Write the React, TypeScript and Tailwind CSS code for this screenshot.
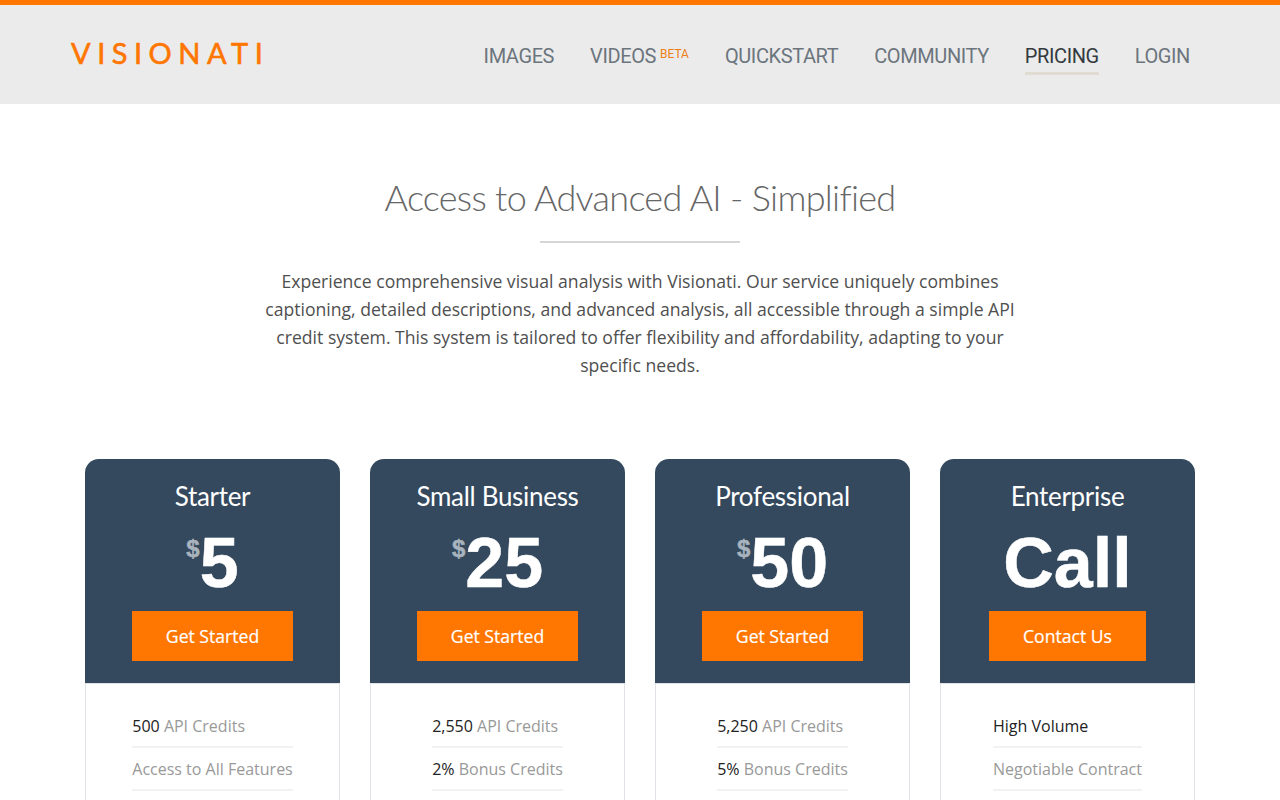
const navItems = ["IMAGES", "VIDEOS", "QUICKSTART", "COMMUNITY", "PRICING", "LOGIN"];

interface Plan {
  name: string;
  price: string;
  button: string;
  features: [string, string][];
}

const plans: Plan[] = [
  { name: "Starter", price: "5", button: "Get Started", features: [["500", " API Credits"], ["", "Access to All Features"]] },
  { name: "Small Business", price: "25", button: "Get Started", features: [["2,550", " API Credits"], ["2%", " Bonus Credits"]] },
  { name: "Professional", price: "50", button: "Get Started", features: [["5,250", " API Credits"], ["5%", " Bonus Credits"]] },
  { name: "Enterprise", price: "Call", button: "Contact Us", features: [["High Volume", ""], ["", "Negotiable Contract"]] },
];

function PlanCard({ plan }: { plan: Plan }) {
  const isCall = plan.price === "Call";
  return (
    <div className="w-[255px] h-[341px] shrink-0">
      <div className="h-[224px] rounded-t-[14px] bg-[#34495e] flex flex-col items-center pt-[20px]">
        <h3 className="font-['Lato'] font-normal text-[26px] leading-[35px] tracking-[-0.3px] text-white">{plan.name}</h3>
        <div className="h-[67px] mt-[16px] flex items-start justify-center font-['Liberation_Sans'] font-bold text-white [-webkit-text-stroke:0.5px]">
          {!isCall && <span className="text-[24px] leading-[28px] mt-[5px] text-[#a9b3bd]">$</span>}
          <span className="text-[70px] leading-[67px]">{plan.price}</span>
        </div>
        <a className="mt-[14px] h-[50px] px-[34px] flex items-center bg-[#ff7600] font-['Open_Sans'] font-medium text-[17.6px] text-white [-webkit-text-stroke:0.2px]">
          {plan.button}
        </a>
      </div>
      <div className="h-[117px] border-x border-t border-[#dfe3e8] flex justify-center pt-[21px]">
        <ul className="font-['Open_Sans'] text-[16px] leading-[22px] text-[#999999]">
          {plan.features.map(([strong, rest]) => (
            <li key={strong + rest} className="h-[43px] border-b-2 border-[#f2f2f2] pt-[10px]">
              <span className="text-[#222222]">{strong}</span>
              {rest}
            </li>
          ))}
        </ul>
      </div>
    </div>
  );
}

export default function App() {
  return (
    <div className="h-[800px] overflow-hidden bg-white">
      <header className="h-[104px] border-t-[5px] border-[#ff7600] bg-[#ebebeb] flex items-start justify-between pl-[71px] pr-[90px]">
        <a className="mt-[30px] font-['Lato'] font-normal text-[29px] leading-[36px] tracking-[6.5px] text-[#ff7600] [-webkit-text-stroke:0.6px_#ff7600]">VISIONATI</a>
        <nav className="flex gap-[36px] mt-[37px]">
          {navItems.map((item) => (
            <a
              key={item}
              className={`font-['Roboto'] font-normal text-[20px] leading-[28px] tracking-[-0.4px] border-b-[3px] ${
                item === "PRICING" ? "text-[#333a40] border-[#e0dcd2]" : "text-[#6c757d] border-transparent"
              }`}
            >
              {item}
              {item === "VIDEOS" && (
                <span className="ml-[4px] relative -top-[4px] align-middle text-[12px] tracking-normal text-[#ee7f16] font-normal">BETA</span>
              )}
            </a>
          ))}
        </nav>
      </header>

      <main className="flex flex-col items-center">
        <h1 className="mt-[71px] font-['Lato'] font-light text-[36px] leading-[45px] tracking-[-0.7px] text-[#666666]">
          Access to Advanced AI - Simplified
        </h1>
        <div className="mt-[21px] w-[200px] h-[2px] bg-[#d6d6d6]" />
        <p className="mt-[24px] w-[760px] text-center font-['Open_Sans'] text-[17.6px] leading-[28px] text-[#4f4f4f]">
          Experience comprehensive visual analysis with Visionati. Our service uniquely combines captioning, detailed
          descriptions, and advanced analysis, all accessible through a simple API credit system. This system is
          tailored to offer flexibility and affordability, adapting to your specific needs.
        </p>
        <section className="mt-[80px] flex gap-[30px]">
          {plans.map((plan) => (
            <PlanCard key={plan.name} plan={plan} />
          ))}
        </section>
      </main>
    </div>
  );
}
